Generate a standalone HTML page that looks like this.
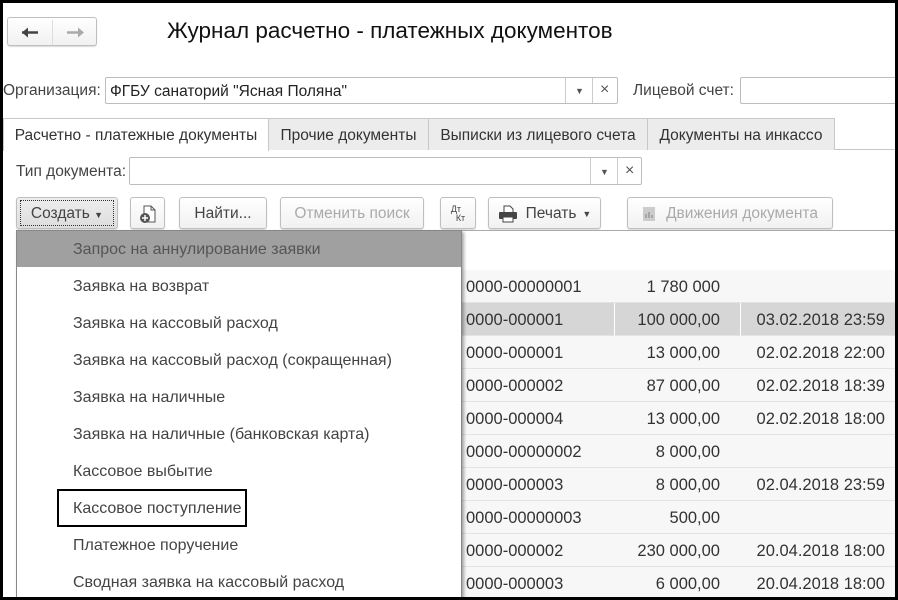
<!DOCTYPE html>
<html><head><meta charset="utf-8"><style>
*{margin:0;padding:0;box-sizing:border-box}
body{width:898px;height:600px;overflow:hidden;background:#fff;font-family:"Liberation Sans",Arial,sans-serif;font-size:15.5px;color:#333;position:relative}
.a{position:absolute}
.frame{position:absolute;left:0;top:0;width:898px;height:600px;border:3px solid #000;pointer-events:none;z-index:50}
.btn{position:absolute;border:1px solid #bfbfbf;border-radius:3px;background:linear-gradient(#fff,#f1f1f1);box-shadow:0 1px 1px rgba(0,0,0,.15);display:flex;align-items:center;justify-content:center;color:#444;font-size:15.5px;padding-top:2px}
.inp{position:absolute;border:1px solid #bdbdbd;border-radius:2px;background:#fff;font-size:15.5px;color:#222;padding-left:4px;display:flex;align-items:center}
.lbl{position:absolute;font-size:15.5px;color:#444}
.tab{position:absolute;top:118px;height:32px;border:1px solid #c8c8c8;border-bottom:none;background:#ececec;display:flex;align-items:center;justify-content:center;font-size:15.5px;color:#333;white-space:nowrap;padding-top:2px}
.row{position:absolute;left:460px;width:438px;height:33px;background:#f7f7f7;border-bottom:1px solid #e3e3e3;font-size:16.5px;color:#333}
.row span{position:absolute;top:8px;white-space:nowrap}
.c1{left:6px}.c2{right:178px}.c3{right:13px}
.sel{background:#d6d6d6}
.menu{position:absolute;left:16px;top:230px;width:446px;height:370px;background:#fff;border:1px solid #888;box-shadow:2px 2px 3px rgba(0,0,0,.35);z-index:10}
.it{position:absolute;left:56px;font-size:16px;color:#444;white-space:nowrap}
</style></head><body>
<div class="btn" style="left:7px;top:17px;width:90px;height:29px;justify-content:flex-start">
<svg width="90" height="29" style="position:absolute;left:0;top:0"><line x1="44.5" y1="2" x2="44.5" y2="27" stroke="#ddd"/><path d="M14 14.5h16" stroke="#444" stroke-width="2.5"/><path d="M14 14.5l6-5v10z" fill="#444"/><path d="M59 14.5h14" stroke="#aaa" stroke-width="2.5"/><path d="M76 14.5l-6-5v10z" fill="#aaa"/></svg></div>
<div class="a" style="left:167px;top:18px;font-size:22.5px;color:#111;white-space:nowrap">Журнал расчетно - платежных документов</div>

<div class="lbl" style="left:3px;top:82px">Организация:</div>
<div class="inp" style="left:105px;top:77px;width:513px;height:27px;padding-top:2px">ФГБУ санаторий "Ясная Поляна"</div>
<div class="a" style="left:565px;top:78px;width:1px;height:25px;background:#ccc"></div>
<div class="a" style="left:592px;top:78px;width:1px;height:25px;background:#ccc"></div>
<div class="a" style="left:575px;top:86px;font-size:9px;color:#555">▼</div>
<div class="a" style="left:600px;top:81px;font-size:16px;color:#555">×</div>
<div class="lbl" style="left:633px;top:82px">Лицевой счет:</div>
<div class="inp" style="left:740px;top:77px;width:170px;height:27px"></div>

<div class="a" style="left:3px;top:149px;width:895px;height:1px;background:#c8c8c8"></div>
<div class="tab" style="left:3px;width:266px;background:#fff;height:33px">Расчетно - платежные документы</div>
<div class="tab" style="left:268px;width:161px">Прочие документы</div>
<div class="tab" style="left:428px;width:220px">Выписки из лицевого счета</div>
<div class="tab" style="left:647px;width:188px">Документы на инкассо</div>

<div class="lbl" style="left:16px;top:163px">Тип документа:</div>
<div class="inp" style="left:129px;top:157px;width:513px;height:28px"></div>
<div class="a" style="left:590px;top:158px;width:1px;height:26px;background:#ccc"></div>
<div class="a" style="left:617px;top:158px;width:1px;height:26px;background:#ccc"></div>
<div class="a" style="left:600px;top:167px;font-size:9px;color:#555">▼</div>
<div class="a" style="left:625px;top:162px;font-size:16px;color:#555">×</div>

<div class="btn" style="left:16px;top:197px;width:102px;height:32px;background:linear-gradient(#eee,#ddd);padding-top:0"><div style="border:1px dotted #333;padding:4px 2px 2px;width:94px;text-align:center;white-space:nowrap">Создать <span style="font-size:9px">▼</span></div></div>
<div class="btn" style="left:130px;top:197px;width:35px;height:32px"><svg width="20" height="20"><path d="M6 2h7l4 4v12H6z" fill="#fff" stroke="#555"/><path d="M13 2v4h4" fill="none" stroke="#555"/><circle cx="7" cy="14" r="5" fill="#555"/><path d="M7 11v6M4 14h6" stroke="#fff" stroke-width="1.5"/></svg></div>
<div class="btn" style="left:179px;top:197px;width:88px;height:32px">Найти...</div>
<div class="btn" style="left:280px;top:197px;width:144px;height:32px;color:#aaa">Отменить поиск</div>
<div class="btn" style="left:440px;top:197px;width:36px;height:32px;font-size:9px;line-height:9px"><div>Дт<br>&nbsp;&nbsp;Кт</div></div>
<div class="btn" style="left:488px;top:197px;width:113px;height:32px;white-space:nowrap"><svg width="20" height="18" style="margin-right:8px"><path d="M6 1h6l3 3v4H6z" fill="#fff" stroke="#444"/><rect x="1" y="7" width="18" height="7" rx="1" fill="#444"/><rect x="5" y="12" width="10" height="5" fill="#fff" stroke="#444"/></svg>Печать <span style="font-size:9px;margin-left:6px">▼</span></div>
<div class="btn" style="left:627px;top:197px;width:206px;height:32px;color:#aaa;white-space:nowrap"><svg width="14" height="16" style="margin-right:10px"><rect x="1" y="1" width="12" height="14" fill="#ccc"/><path d="M4 12V8M7 12V6M10 12V9" stroke="#999" stroke-width="1.5"/></svg>Движения документа</div>

<div class="a" style="left:460px;top:230px;width:438px;height:1px;background:#aaa"></div>
<div class="row" style="top:270px"><span class="c1">0000-00000001</span><span class="c2">1 780 000</span></div>
<div class="row sel" style="top:303px"><span class="c1">0000-000001</span><span class="c2">100 000,00</span><span class="c3">03.02.2018 23:59</span><div class="a" style="left:154px;top:0;width:1px;height:33px;background:#fff"></div><div class="a" style="left:280px;top:0;width:1px;height:33px;background:#fff"></div></div>
<div class="row" style="top:336px"><span class="c1">0000-000001</span><span class="c2">13 000,00</span><span class="c3">02.02.2018 22:00</span></div>
<div class="row" style="top:369px"><span class="c1">0000-000002</span><span class="c2">87 000,00</span><span class="c3">02.02.2018 18:39</span></div>
<div class="row" style="top:402px"><span class="c1">0000-000004</span><span class="c2">13 000,00</span><span class="c3">02.02.2018 18:00</span></div>
<div class="row" style="top:435px"><span class="c1">0000-00000002</span><span class="c2">8 000,00</span></div>
<div class="row" style="top:468px"><span class="c1">0000-000003</span><span class="c2">8 000,00</span><span class="c3">02.04.2018 23:59</span></div>
<div class="row" style="top:501px"><span class="c1">0000-00000003</span><span class="c2">500,00</span></div>
<div class="row" style="top:534px"><span class="c1">0000-000002</span><span class="c2">230 000,00</span><span class="c3">20.04.2018 18:00</span></div>
<div class="row" style="top:567px"><span class="c1">0000-000003</span><span class="c2">6 000,00</span><span class="c3">20.04.2018 18:00</span></div>

<div class="menu">
<div class="a" style="left:0;top:0;width:444px;height:36px;background:#a0a0a0"></div>
<div class="it" style="top:10px;color:#555">Запрос на аннулирование заявки</div>
<div class="it" style="top:47px">Заявка на возврат</div>
<div class="it" style="top:84px">Заявка на кассовый расход</div>
<div class="it" style="top:121px">Заявка на кассовый расход (сокращенная)</div>
<div class="it" style="top:158px">Заявка на наличные</div>
<div class="it" style="top:195px">Заявка на наличные (банковская карта)</div>
<div class="it" style="top:232px">Кассовое выбытие</div>
<div class="it" style="top:269px">Кассовое поступление</div>
<div class="it" style="top:306px">Платежное поручение</div>
<div class="it" style="top:343px">Сводная заявка на кассовый расход</div>
<div class="a" style="left:40px;top:258px;width:190px;height:38px;border:2px solid #000"></div>
</div>
<div class="frame"></div>
</body></html>
